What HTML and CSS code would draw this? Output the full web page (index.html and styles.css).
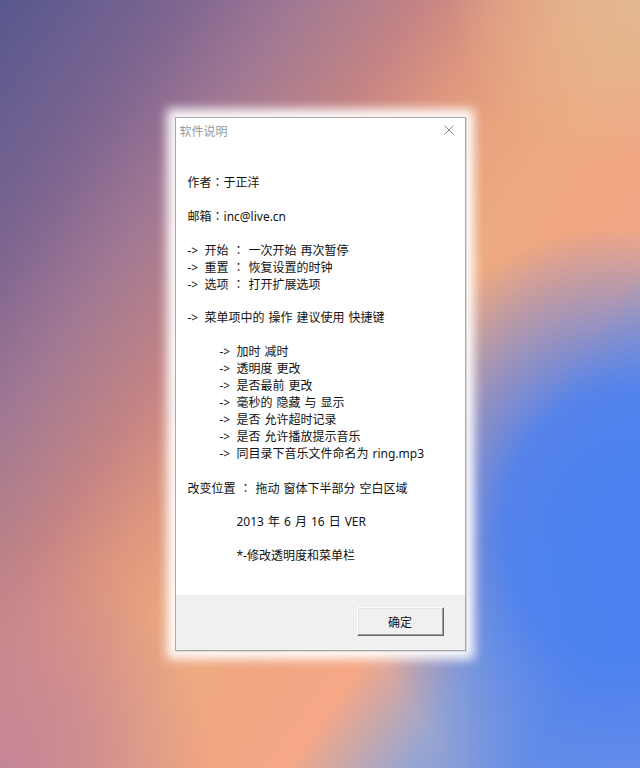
FILE: index.html
```html
<!DOCTYPE html>
<html lang="zh-CN">
<head>
<meta charset="utf-8">
<title>软件说明</title>
<link rel="stylesheet" href="styles.css">
</head>
<body>
<div class="stage">
  <div class="window">
    <div class="titlebar">
      <span class="title">软件说明</span>
      <span class="close">
        <svg width="10" height="10" viewBox="0 0 10 10"><path d="M0.5 0.5 L9.5 9.5 M9.5 0.5 L0.5 9.5" stroke="#8a8a8a" stroke-width="1" fill="none"/></svg>
      </span>
    </div>
    <div class="content">
      <div class="line">作者<span class="cl" lang="ja">：</span>于正洋</div>
      <div class="line"></div>
      <div class="line">邮箱<span class="cl" lang="ja">：</span>inc@live.cn</div>
      <div class="line"></div>
      <div class="line"><span class="ar">-&gt;</span>开始 <span class="cl" lang="ja">：</span> 一次开始 再次暂停</div>
      <div class="line"><span class="ar">-&gt;</span>重置 <span class="cl" lang="ja">：</span> 恢复设置的时钟</div>
      <div class="line"><span class="ar">-&gt;</span>选项 <span class="cl" lang="ja">：</span> 打开扩展选项</div>
      <div class="line"></div>
      <div class="line"><span class="ar">-&gt;</span>菜单项中的 操作 建议使用 快捷键</div>
      <div class="line"></div>
      <div class="line sub"><span class="ar">-&gt;</span>加时 减时</div>
      <div class="line sub"><span class="ar">-&gt;</span>透明度 更改</div>
      <div class="line sub"><span class="ar">-&gt;</span>是否最前 更改</div>
      <div class="line sub"><span class="ar">-&gt;</span>毫秒的 隐藏 与 显示</div>
      <div class="line sub"><span class="ar">-&gt;</span>是否 允许超时记录</div>
      <div class="line sub"><span class="ar">-&gt;</span>是否 允许播放提示音乐</div>
      <div class="line sub"><span class="ar">-&gt;</span>同目录下音乐文件命名为 ring.mp3</div>
      <div class="line"></div>
      <div class="line">改变位置 <span class="cl" lang="ja">：</span> 拖动 窗体下半部分 空白区域</div>
      <div class="line"></div>
      <div class="line ver">2013 年 6 月 16 日 VER</div>
      <div class="line"></div>
      <div class="line ver">*-修改透明度和菜单栏</div>
    </div>
    <div class="footer">
      <button class="btn">确定</button>
    </div>
  </div>
</div>
</body>
</html>
```
FILE: styles.css
```css
html, body {
  margin: 0;
  padding: 0;
  width: 640px;
  height: 768px;
  overflow: hidden;
}
body {
  background:
    radial-gradient(ellipse 190px 170px at 640px 0px, #e2b890 0%, rgba(226,184,144,0.6) 45%, rgba(226,184,144,0) 100%),
    radial-gradient(ellipse 210px 230px at 0px 768px, #c48596 0%, rgba(196,133,150,0.7) 45%, rgba(196,133,150,0) 100%),
    radial-gradient(ellipse 270px 300px at 625px 525px, #4a80f0 0%, rgba(74,128,240,0.92) 45%, rgba(74,128,240,0) 100%),
    linear-gradient(125deg, #58588e 0%, #746290 12%, #846890 17%, #9e7694 24%, #b07e8c 30%, #c48484 36%, #de967e 43%, #eaa47e 50%, #eeaa80 56%, #f2a682 63%, #f6a886 70%, #9aa6d0 80%, #6a90e4 90%, #7090e8 100%);
  font-family: "Noto Sans", "Noto Sans CJK SC", sans-serif;
}
.stage {
  width: 640px;
  height: 768px;
  display: flex;
  align-items: center;
  justify-content: center;
}
.window {
  width: 289px;
  height: 532px;
  background: #fff;
  border: 1px solid #a9a9a9;
  box-shadow: 1px 1px 0 rgba(0,0,0,0.12), 0 0 10px 8px rgba(255,255,255,0.97);
  display: flex;
  flex-direction: column;
}
.titlebar {
  height: 24px;
  display: flex;
  align-items: center;
  justify-content: space-between;
  padding: 0 11px 0 4px;
}
.title {
  font-size: 12px;
  color: #9a9a9a;
  font-family: "Noto Sans CJK SC", sans-serif;
}
.close {
  display: flex;
  width: 10px;
  height: 10px;
}
.content {
  flex: 1;
  padding: 31px 0 0 12px;
  font-size: 12px;
  color: #111;
  word-spacing: 0.9px;
}
.line {
  height: 17px;
  line-height: 17px;
  white-space: pre;
}
.cl {
  font-family: "Noto Sans CJK JP", sans-serif;
}
.ar {
  display: inline-block;
  width: 17px;
  word-spacing: 0;
}
.sub {
  padding-left: 32px;
}
.ver {
  padding-left: 49px;
}
.footer {
  height: 55px;
  background: #f0f0f0;
  display: flex;
  justify-content: flex-end;
  align-items: flex-start;
  padding: 12px 21px 0 0;
  box-sizing: border-box;
}
.btn {
  width: 87px;
  height: 29px;
  background: #f0f0f0;
  border: 1px solid;
  border-color: #fcfcfc #646464 #646464 #fcfcfc;
  box-shadow: inset -1px -1px 0 #a0a0a0, inset 1px 1px 0 #e3e3e3;
  font-family: "Noto Sans CJK SC", sans-serif;
  font-size: 12px;
  color: #111;
  padding: 0;
}
```
